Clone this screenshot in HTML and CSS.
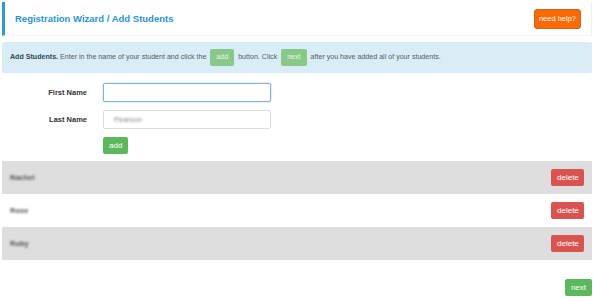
FILE: index.html
```html
<!DOCTYPE html>
<html lang="en">
<head>
  <meta charset="UTF-8">
  <title>Registration Wizard</title>
  <link rel="stylesheet" href="styles.css">
</head>
<body>
  <div class="wrap">
    <header class="page-header">
      <h1>Registration Wizard / Add Students</h1>
      <button class="help-button">need help?</button>
    </header>

    <div class="info">
      <strong>Add Students.</strong> Enter in the name of your student and click the <span class="tag">add</span> button. Click <span class="tag">next</span> after you have added all of your students.
    </div>

    <form class="student-form">
      <div class="form-row">
        <label for="first-name">First Name</label>
        <input type="text" id="first-name" class="field focused">
      </div>
      <div class="form-row">
        <label for="last-name">Last Name</label>
        <input type="text" id="last-name" class="field" placeholder="Pearson">
      </div>
      <div class="form-row">
        <span class="spacer"></span>
        <button type="button" class="btn btn-green">add</button>
      </div>
    </form>

    <div class="students">
      <div class="student odd">
        <span class="name">Rachel</span>
        <button class="btn btn-red">delete</button>
      </div>
      <div class="student">
        <span class="name">Rose</span>
        <button class="btn btn-red">delete</button>
      </div>
      <div class="student odd">
        <span class="name">Ruby</span>
        <button class="btn btn-red">delete</button>
      </div>
    </div>

    <div class="footer">
      <button class="btn btn-green">next</button>
    </div>
  </div>
</body>
</html>
```

FILE: styles.css
```css
body {
  margin: 0;
  font-family: "Liberation Sans", Arial, sans-serif;
  color: #333;
  background: #fff;
}

.wrap {
  width: 590px;
  margin: 2px 0 0 2px;
}

.page-header {
  display: flex;
  justify-content: space-between;
  align-items: center;
  height: 33px;
  padding: 0 10px 0 10px;
  border-left: 3px solid #2a9ad8;
  border-right: 1px solid #f0f0f0;
  border-bottom: 1px solid #f4f4f4;
}

.page-header h1 {
  margin: 0;
  font-size: 9.5px;
  font-weight: bold;
  color: #2a95d6;
}

.help-button {
  height: 20px;
  padding: 0 4px;
  font-family: inherit;
  font-size: 7.5px;
  color: #fff;
  background: #ff6a00;
  border: 1px solid #c8641e;
  border-radius: 3px;
}

.info {
  margin-top: 6px;
  height: 31px;
  box-sizing: border-box;
  padding: 7px 8px;
  line-height: 17px;
  font-size: 7.1px;
  color: #555c62;
  background: #d9edf7;
  border-radius: 2px;
}

.info strong {
  color: #2f4756;
}

.tag {
  display: inline-block;
  padding: 0 6px;
  margin: 0 2px;
  color: #eaf5e8;
  background: #88c98a;
  border-radius: 2px;
}

.student-form {
  padding: 10px 0 7px;
}

.form-row {
  display: flex;
  align-items: center;
  margin-bottom: 8px;
}

.form-row:last-child {
  margin-bottom: 0;
}

.form-row label,
.spacer {
  width: 85px;
  margin-right: 16px;
  text-align: right;
  font-size: 7.5px;
  font-weight: bold;
  color: #333;
}

.field {
  box-sizing: border-box;
  width: 168px;
  height: 19px;
  padding: 0 10px;
  font-family: inherit;
  font-size: 7.5px;
  border: 1px solid #ddd;
  border-radius: 2px;
}

.field::placeholder {
  color: #888;
  filter: blur(1px);
}

.focused {
  border-color: #7fb3e0;
  box-shadow: 0 0 2px rgba(102, 160, 220, 0.6);
}

.btn {
  height: 17px;
  padding: 0 6px;
  font-family: inherit;
  font-size: 8px;
  color: #fff;
  border: none;
  border-radius: 2px;
}

.btn-green {
  background: #5cb85c;
}

.btn-red {
  width: 33px;
  background: #d9534f;
}

.student {
  display: flex;
  justify-content: space-between;
  align-items: center;
  height: 33px;
  padding: 0 8px;
}

.student.odd {
  background: #dedede;
}

.name {
  font-size: 7.5px;
  font-weight: bold;
  color: #555;
  filter: blur(1.2px);
}

.footer {
  display: flex;
  justify-content: flex-end;
  padding-top: 19px;
}
```
